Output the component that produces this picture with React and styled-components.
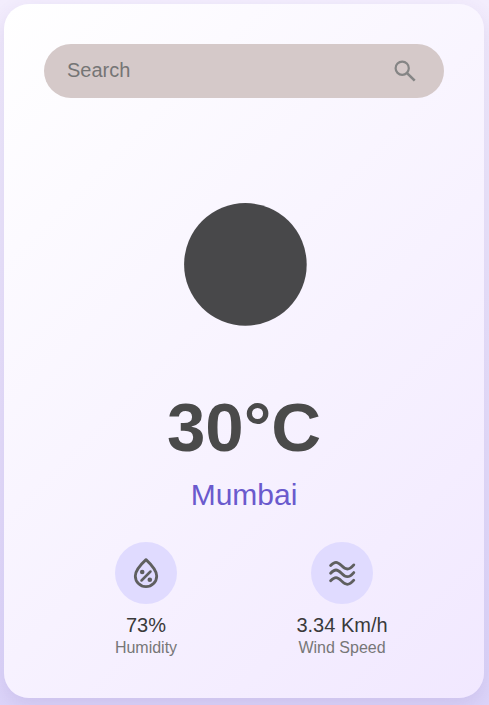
import React from "react";
import styled, { createGlobalStyle } from "styled-components";

const GlobalStyle = createGlobalStyle`
  * { box-sizing: border-box; margin: 0; padding: 0; }
  body { font-family: "Liberation Sans", Arial, sans-serif; background: linear-gradient(#f3edfd, #ddd5fa) no-repeat; min-height: 100vh; }
`;

const Page = styled.main`
  min-height: 100vh;
  padding: 4px 5px 7px 4px;
  display: flex;
`;

const Card = styled.section`
  flex: 1;
  display: flex;
  flex-direction: column;
  align-items: center;
  padding: 40px;
  border-radius: 25px;
  background: linear-gradient(135deg, #ffffff, #f1e8ff);
  box-shadow: 0 8px 20px rgba(80, 60, 140, 0.12);
`;

const SearchBar = styled.form`
  align-self: stretch;
  height: 54px;
  display: flex;
  align-items: center;
  border-radius: 27px;
  padding: 0 25px 0 23px;
  background: #d5c9c9;
`;

const SearchInput = styled.input`
  flex: 1;
  min-width: 0;
  height: 52px;
  padding-bottom: 2px;
  border: 0;
  outline: 0;
  background: transparent;
  font: 20px "Liberation Sans", Arial, sans-serif;
  color: #4a4a4a;
  &::placeholder { color: #757575; }
`;

const SearchButton = styled.button`
  display: flex;
  border: 0;
  background: transparent;
  color: #858585;
`;

const WeatherIcon = styled.svg`
  width: 250px;
  height: 250px;
  margin-top: 41px;
`;

const Temperature = styled.h1`
  font-size: 69px;
  line-height: 78px;
  color: #4a4a4a;
`;

const City = styled.p`
  margin-top: 11px;
  font-size: 30px;
  line-height: 34px;
  color: #6a5acd;
`;

const Stats = styled.div`
  align-self: stretch;
  display: grid;
  grid-template-columns: 1fr 1fr;
  padding: 0 4px;
  margin-top: 30px;
`;

const Stat = styled.div`
  display: flex;
  flex-direction: column;
  align-items: center;
`;

const Badge = styled.div`
  width: 62px;
  height: 62px;
  display: grid;
  place-items: center;
  border-radius: 50%;
  background: #e0dbff;
  color: #5f5f5f;
`;

const Value = styled.p`
  margin-top: 10px;
  font-size: 20px;
  line-height: 23px;
  color: #3a3a3a;
`;

const Label = styled.p`
  font-size: 16px;
  line-height: 21px;
  color: #777;
`;

const SearchGlyph = () => (
  <svg width="28" height="28" viewBox="0 0 28 28" fill="none" stroke="currentColor" strokeWidth="2.2" aria-hidden="true">
    <circle cx="11.2" cy="11.2" r="6.6" />
    <path d="M15.800 15.800 23.700 23.700" strokeWidth="2.6" />
  </svg>
);

const Humidity = () => (
  <svg width="32" height="32" viewBox="0 0 32 32" fill="none" stroke="currentColor" strokeWidth="2.8" strokeLinejoin="round" aria-hidden="true">
    <path d="M16 2.600C11 7.200 5.300 13.300 5.300 19a10.700 10.700 0 0 0 21.400 0C26.700 13.300 21 7.200 16 2.600Z" />
    <path d="M11.500 23.500 20.500 14.500" strokeLinecap="round" strokeWidth="2.5" />
    <circle cx="12.200" cy="15" r="2.3" fill="currentColor" stroke="none" />
    <circle cx="19.800" cy="22.800" r="2.3" fill="currentColor" stroke="none" />
  </svg>
);

const Wind = () => (
  <svg width="32" height="32" viewBox="0 0 32 32" fill="none" stroke="currentColor" strokeWidth="2.8" strokeLinecap="round" aria-hidden="true">
    {[8.5, 16.2, 23.8].map((y) => (
      <path key={y} d={`M4.600 ${y}C6.500 ${y - 2} 8 ${y - 3.2} 10 ${y - 3.2}C14.500 ${y - 3.2} 16.500 ${y + 3.5} 21.300 ${y + 3.5}C24 ${y + 3.5} 26 ${y + 1.5} 27.800 ${y - 0.6}`} />
    ))}
  </svg>
);

const details = [
  { value: "73%", label: "Humidity", Icon: Humidity },
  { value: "3.34 Km/h", label: "Wind Speed", Icon: Wind },
];

export default function App() {
  return (
    <>
      <GlobalStyle />
      <Page>
        <Card>
          <SearchBar role="search" onSubmit={(e) => e.preventDefault()}>
            <SearchInput type="text" placeholder="Search" aria-label="Search" />
            <SearchButton type="submit" aria-label="Submit search"><SearchGlyph /></SearchButton>
          </SearchBar>
          <WeatherIcon viewBox="0 0 250 250" aria-hidden="true">
            <circle cx="126.4" cy="125.4" r="61.3" fill="#48484a" />
          </WeatherIcon>
          <Temperature>30°C</Temperature>
          <City>Mumbai</City>
          <Stats>
            {details.map(({ value, label, Icon }) => (
              <Stat key={label}>
                <Badge><Icon /></Badge>
                <Value>{value}</Value>
                <Label>{label}</Label>
              </Stat>
            ))}
          </Stats>
        </Card>
      </Page>
    </>
  );
}
